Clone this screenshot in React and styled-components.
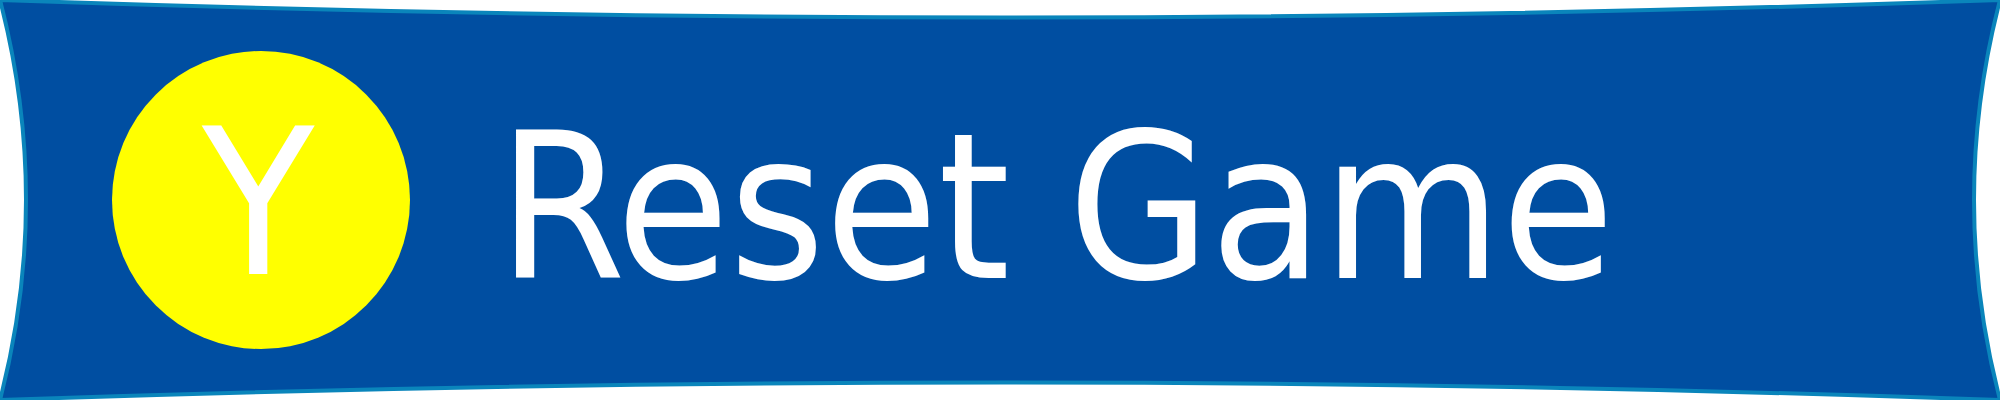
import React from "react";
import styled, { createGlobalStyle } from "styled-components";

const GlobalStyle = createGlobalStyle`
  body {
    margin: 0;
    background: #ffffff;
  }
`;

const BannerButton = styled.button`
  position: relative;
  display: flex;
  align-items: center;
  gap: 88px;
  width: 100%;
  margin: 0;
  padding: 51px 112px;
  border: 0;
  background: transparent;
  color: #ffffff;
  font-family: "DejaVu Sans Condensed", "Tahoma", "DejaVu Sans", sans-serif;
  font-size: 204px;
  line-height: 240px;
  text-align: left;
  white-space: nowrap;
  cursor: pointer;
`;

const Plate = styled.svg`
  position: absolute;
  inset: 0;
  width: 100%;
  height: 100%;
`;

const KeyBadge = styled.span`
  position: relative;
  display: flex;
  flex: none;
  align-items: center;
  justify-content: center;
  box-sizing: border-box;
  width: 298px;
  height: 298px;
  padding: 8px 6px 0 0;
  border-radius: 50%;
  background: #ffff00;
`;

const Label = styled.span`
  position: relative;
  padding-top: 16px;
`;

export default function App() {
  return (
    <>
      <GlobalStyle />
      <BannerButton type="button">
        <Plate viewBox="0 0 2000 400" preserveAspectRatio="none" aria-hidden="true">
          <path
            d="M0 0Q1000 35 2000 0Q1948 200 2000 400Q1000 365 0 400Q52 200 0 0Z"
            fill="#004ea1"
            stroke="#0a85bb"
            strokeWidth="4"
          />
        </Plate>
        <KeyBadge>Y</KeyBadge>
        <Label>Reset Game</Label>
      </BannerButton>
    </>
  );
}
